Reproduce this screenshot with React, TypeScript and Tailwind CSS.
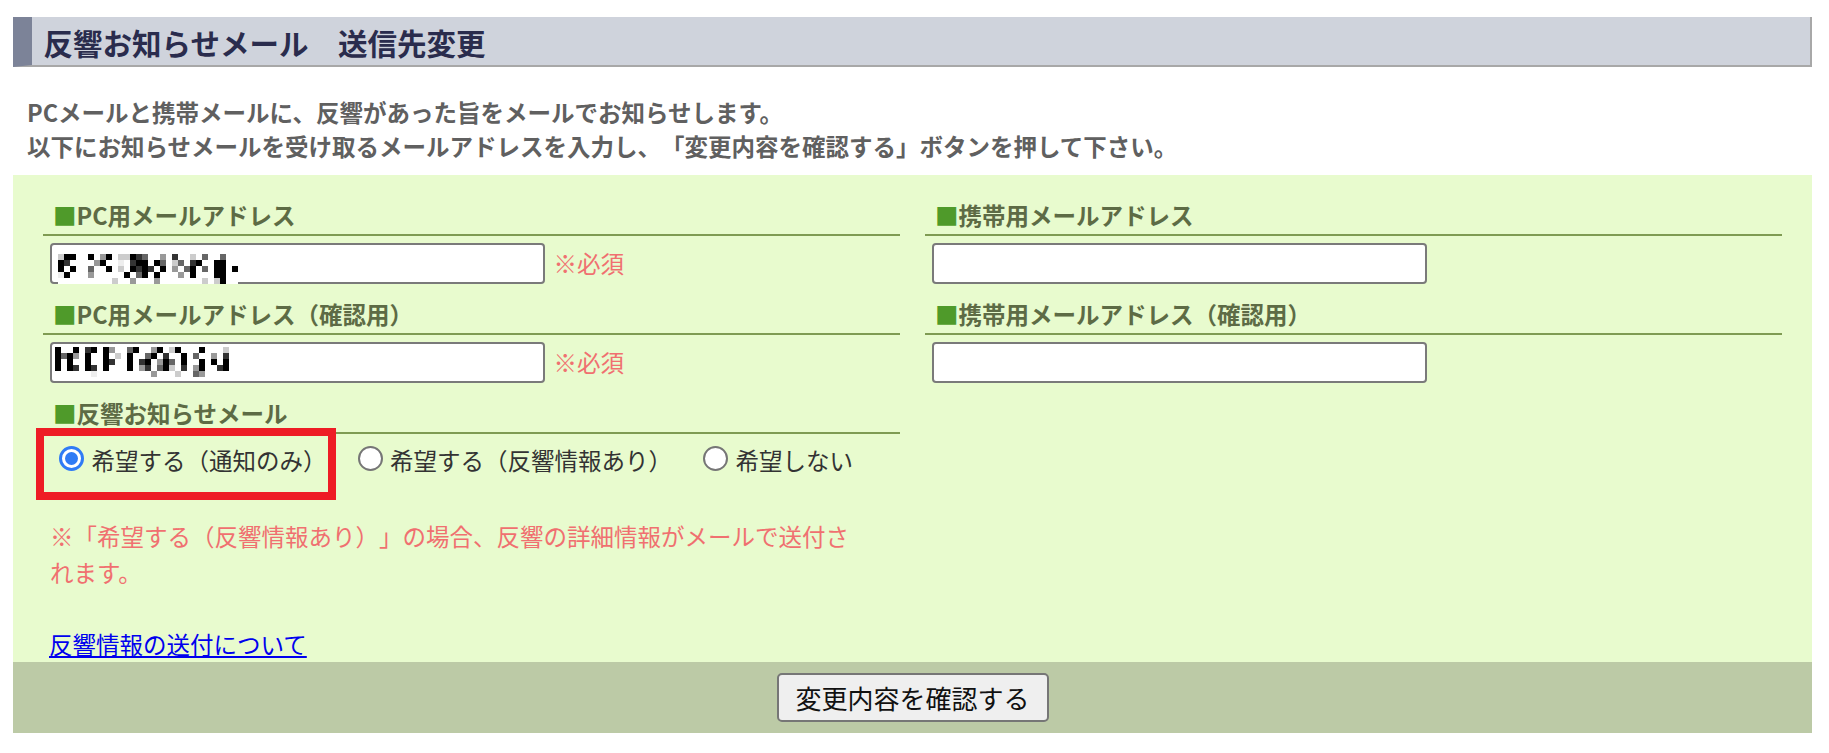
import React from 'react';

// pixelated (masked) email addresses, one char per 6px cell
const maskPc = [
  '2##..#.4#.22#86..4.8..2.6..6..',
  '#8....4#..1.8##.#6.26.8#..##..',
  '#.#..6..#.2.#8#8.#.4.6#.6.##.#',
  '1#...4.....#.6#.#...4.#...##..',
  '.........2..4...4.......2.2#..',
];

const maskPcConfirm = [
  '#..#.8#.#4..6#..4#.2#...#...2.',
  '#6#4.#..#.2.#..6#.8..#.6..4.8.',
  '#.#..#..#8..#.8#.4#6.#..#.#.#.',
  '#.#8.#8.#...#.48.6#2.8.4#..8#.',
  '......1.........4...2..64.....',
];

const shades: Record<string, string> = {
  '#': '#000000',
  '8': '#333333',
  '6': '#666666',
  '4': '#999999',
  '2': '#cccccc',
  '1': '#eeeeee',
  '.': '#ffffff',
};

function Mosaic({ rows, className }: { rows: string[]; className: string }) {
  const cell = 6;
  return (
    <svg
      className={className}
      width={rows[0].length * cell}
      height={rows.length * cell}
      shapeRendering="crispEdges"
    >
      {rows.flatMap((row, y) =>
        row.split('').map((c, x) => (
          <rect key={`${x}-${y}`} x={x * cell} y={y * cell} width={cell} height={cell} fill={shades[c]} />
        ))
      )}
    </svg>
  );
}

function FieldLabel({ children }: { children: React.ReactNode }) {
  return (
    <div className="h-[39px] border-b-2 border-[#7f9b53] pl-[10px] flex items-center text-[23.5px] leading-none font-bold text-[#5d6b45]">
      <span className="text-[#4f9a2a]">■</span>
      {children}
    </div>
  );
}

function EmailField({
  label,
  required,
  mask,
  maskClass,
  first,
}: {
  label: string;
  required?: boolean;
  mask?: string[];
  maskClass?: string;
  first?: boolean;
}) {
  return (
    <div className={first ? '' : 'mt-[12px]'}>
      <FieldLabel>{label}</FieldLabel>
      <div className="mt-[7px] ml-[7px] flex items-center">
        <div className="relative w-[495px] h-[41px] border-2 border-[#7a7a7a] rounded-[4px] bg-white">
          <input type="text" className="w-full h-full bg-transparent outline-none px-2" aria-label={label} />
          {mask && <Mosaic rows={mask} className={`absolute ${maskClass}`} />}
        </div>
        {required && <span className="ml-[8.5px] text-[23.5px] leading-none text-[#f07070]">※必須</span>}
      </div>
    </div>
  );
}

function Radio({ checked, label, className }: { checked?: boolean; label: string; className?: string }) {
  return (
    <label className={`flex items-center ${className ?? ''}`}>
      {checked ? (
        <span className="mb-[5px] w-[25px] h-[25px] rounded-full border-[3px] border-[#2f7bf5] bg-white flex items-center justify-center">
          <span className="w-[13px] h-[13px] rounded-full bg-[#2f7bf5]" />
        </span>
      ) : (
        <span className="mb-[5px] w-[25px] h-[25px] rounded-full border-2 border-[#767676] bg-white" />
      )}
      <span className="ml-[7.5px] text-[23.5px] leading-none text-[#333333]">{label}</span>
    </label>
  );
}

export default function App() {
  return (
    <div className="w-[1829px] h-[753px] bg-white font-['Noto_Sans_CJK_JP','Liberation_Sans',sans-serif] [text-spacing-trim:space-all]">
      <div className="ml-[13px] w-[1799px] pt-[16.7px]">
        {/* page header */}
        <div className="h-[50px] bg-[#cfd3dc] border-l-[19px] border-l-[#7c8398] border-b-2 border-r-2 border-b-[#a8a8a8] border-r-[#a8a8a8] pl-[11.5px] pt-[5px] flex items-center">
          <h1 className="text-[29.5px] leading-none font-bold text-[#2a2c4d]">反響お知らせメール　送信先変更</h1>
        </div>

        <p className="mt-[29.5px] pl-[14px] text-[23.5px] leading-[33.5px] font-bold text-[#606060]">
          PCメールと携帯メールに、反響があった旨をメールでお知らせします。
          <br />
          以下にお知らせメールを受け取るメールアドレスを入力し、「変更内容を確認する」ボタンを押して下さい。
        </p>

        {/* form body */}
        <div className="mt-[12px] bg-[#e8fbce] pt-[22px] px-[30px] pb-[3.5px] grid grid-cols-2 gap-x-[25px]">
          <div>
            <EmailField label="PC用メールアドレス" required mask={maskPc} maskClass="left-[6px] top-[9px]" first />
            <EmailField label="PC用メールアドレス（確認用）" required mask={maskPcConfirm} maskClass="left-[3px] top-[3px]" />

            <div className="mt-[12px]">
              <FieldLabel>反響お知らせメール</FieldLabel>
            </div>
            <div className="relative mt-[7px] h-[40px] pl-[16px] flex items-center">
              <Radio checked label="希望する（通知のみ）" />
              <Radio label="希望する（反響情報あり）" className="ml-[31px]" />
              <Radio label="希望しない" className="ml-[31px]" />
              <div className="absolute left-[-6.6px] top-[-12.9px] w-[300px] h-[72px] border-[8px] border-[#ee1c25] pointer-events-none" />
            </div>

            <p className="mt-[37px] ml-[7px] w-[812px] text-[23.5px] leading-[36px] text-[#f07070]">
              ※「希望する（反響情報あり）」の場合、反響の詳細情報がメールで送付されます。
            </p>

            <a href="#" className="block w-fit mt-[38.5px] ml-[6px] text-[23.5px] leading-[30px] text-[#0000ee] underline">
              反響情報の送付について
            </a>
          </div>

          <div>
            <EmailField label="携帯用メールアドレス" first />
            <EmailField label="携帯用メールアドレス（確認用）" />
          </div>
        </div>

        <div className="h-[71px] bg-[#bccaa6] flex items-center justify-center">
          <button className="w-[272px] h-[49px] border-2 border-[#767676] rounded-[5px] bg-[#efefef] text-[26px] leading-none text-[#111111]">
            変更内容を確認する
          </button>
        </div>
      </div>
    </div>
  );
}
